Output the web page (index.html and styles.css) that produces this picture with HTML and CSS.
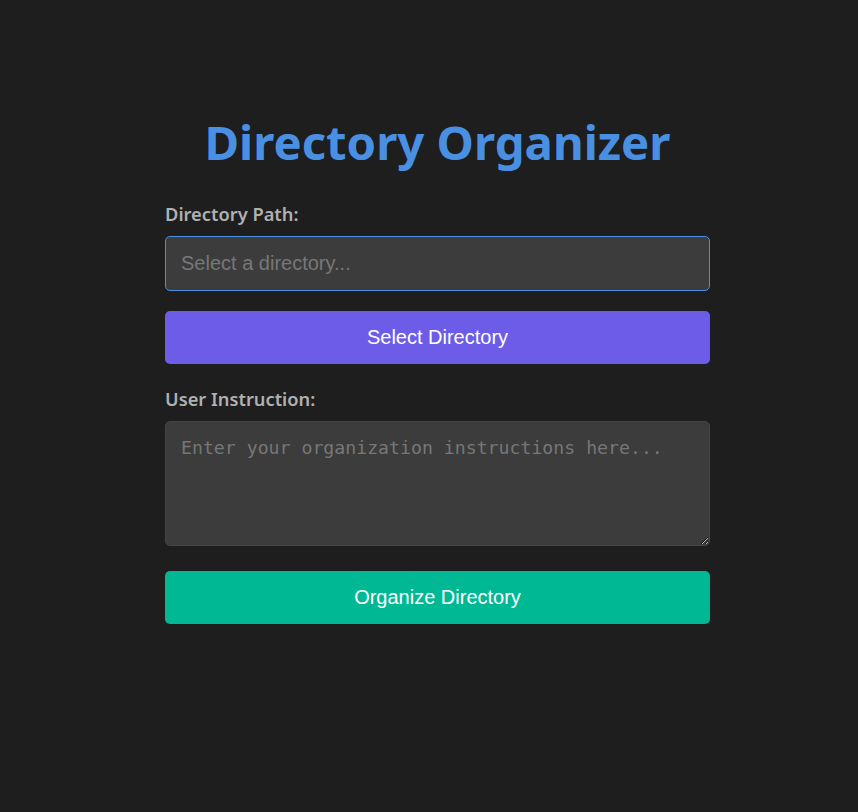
FILE: index.html
```html
<!DOCTYPE html>
<html lang="en">
<head>
<meta charset="utf-8">
<title>Directory Organizer</title>
<link rel="stylesheet" href="styles.css">
</head>
<body>
<main class="container">
  <h1 class="title">Directory Organizer</h1>
  <label class="label" for="dir">Directory Path:</label>
  <input id="dir" class="input" type="text" placeholder="Select a directory..." autofocus>
  <button class="btn btn-select" type="button">Select Directory</button>
  <label class="label" for="instr">User Instruction:</label>
  <textarea id="instr" class="textarea" placeholder="Enter your organization instructions here..."></textarea>
  <button class="btn btn-organize" type="button">Organize Directory</button>
</main>
</body>
</html>
```

FILE: styles.css
```css
html, body {
  margin: 0;
  padding: 0;
  background: #1e1e1e;
  height: 100%;
}
body {
  font-family: "Noto Sans", "Open Sans", sans-serif;
  color: #e0e0e0;
  padding-left: 17px;
  box-sizing: border-box;
}
.container {
  width: 545px;
  margin: 0 auto;
  padding-top: 110px;
  display: flex;
  flex-direction: column;
}
.title {
  margin: 0 0 28px;
  text-align: center;
  color: #4a90e2;
  font-size: 47.3px;
  font-weight: 700;
  line-height: 64px;
}
.label {
  font-size: 18.3px;
  font-weight: 600;
  color: #b0b0b0;
  line-height: 24px;
  margin-bottom: 10px;
}
.input {
  box-sizing: border-box;
  height: 55px;
  padding: 0 15px;
  background: #3c3c3c;
  border: 1px solid #4a90e2;
  border-radius: 5px;
  color: #e0e0e0;
  font-family: "Liberation Sans", Arial, sans-serif;
  font-size: 20px;
  outline: none;
  margin-bottom: 20px;
}
.input::placeholder,
.textarea::placeholder {
  color: #777;
}
.btn {
  box-sizing: border-box;
  height: 53px;
  border: none;
  border-radius: 5px;
  color: #fff;
  font-family: "Liberation Sans", Arial, sans-serif;
  font-size: 20px;
  cursor: pointer;
}
.btn-select {
  background: #6c5ce7;
  margin-bottom: 23px;
}
.btn-organize {
  background: #00b894;
}
.textarea {
  box-sizing: border-box;
  height: 125px;
  padding: 15px;
  background: #3c3c3c;
  border: 1px solid #444;
  border-radius: 5px;
  color: #e0e0e0;
  font-family: "DejaVu Sans Mono", "Liberation Mono", monospace;
  font-size: 18.2px;
  resize: vertical;
  outline: none;
  margin-bottom: 25px;
}
```
